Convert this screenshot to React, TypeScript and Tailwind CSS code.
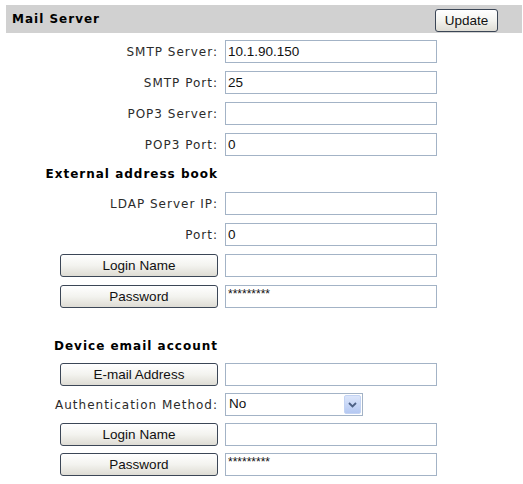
import React from "react";

const LABEL_FONT = { fontFamily: '"DejaVu Sans", Verdana, sans-serif' };
const UI_FONT = { fontFamily: '"Liberation Sans", Arial, sans-serif' };

function Label({ text }: { text: string }) {
  return (
    <div
      className="flex items-center justify-end whitespace-nowrap text-[12px] tracking-[1px] text-[#2b2b2b]"
      style={LABEL_FONT}
    >
      {text}
    </div>
  );
}

function XpButton({ text, className = "" }: { text: string; className?: string }) {
  return (
    <button
      className={`h-[23px] rounded-[3px] border border-[#3b4656] bg-gradient-to-b from-[#ffffff] via-[#f3f3ef] to-[#dedcd4] text-[13.5px] text-[#111111] leading-none ${className}`}
      style={UI_FONT}
    >
      {text}
    </button>
  );
}

function TextBox({ value = "", small = false }: { value?: string; small?: boolean }) {
  return (
    <input
      readOnly
      defaultValue={value}
      className={`h-[23px] w-[212px] border border-[#a3b3c6] bg-white px-[2px] text-[#111111] outline-none ${
        small ? "text-[12px] pb-[5px]" : "text-[13.5px]"
      }`}
      style={UI_FONT}
    />
  );
}

function SelectBox({ value }: { value: string }) {
  return (
    <div
      className="flex h-[23px] w-[138px] items-center border border-[#a3b3c6] bg-white pl-[3px] pr-[1px] text-[13.5px] text-[#111111]"
      style={UI_FONT}
    >
      <span className="flex-1">{value}</span>
      <span className="flex h-[19px] w-[17px] items-center justify-center rounded-[2px] border border-[#c3d3f3] bg-gradient-to-b from-[#dce6fb] to-[#b4c8f2]">
        <svg width="9" height="6" viewBox="0 0 9 6">
          <path d="M1 1 L4.5 4.5 L8 1" fill="none" stroke="#4d6185" strokeWidth="1.8" />
        </svg>
      </span>
    </div>
  );
}

function Heading({ text }: { text: string }) {
  return (
    <>
      <div
        className="flex h-[20px] items-center justify-end whitespace-nowrap text-[12px] font-bold tracking-[1px] text-black"
        style={LABEL_FONT}
      >
        {text}
      </div>
      <div />
    </>
  );
}

function ButtonCell({ text }: { text: string }) {
  return (
    <div className="flex justify-end">
      <XpButton text={text} className="w-[158px]" />
    </div>
  );
}

export default function App() {
  return (
    <div className="h-[484px] w-[523px] bg-white">
      <div className="ml-[6px] mr-[1px] mt-[5px] flex h-[28px] items-center justify-between bg-[#d1d1d1] pl-[6px] pr-[24px]">
        <span className="text-[12px] font-bold tracking-[1px] text-black" style={LABEL_FONT}>
          Mail Server
        </span>
        <XpButton text="Update" className="mt-[3px] w-[63px]" />
      </div>

      <div className="mt-[7px] grid grid-cols-[218px_212px] gap-x-[7px] gap-y-[8px]">
        <Label text="SMTP Server:" />
        <TextBox value="10.1.90.150" />
        <Label text="SMTP Port:" />
        <TextBox value="25" />
        <Label text="POP3 Server:" />
        <TextBox />
        <Label text="POP3 Port:" />
        <TextBox value="0" />

        <Heading text="External address book" />

        <Label text="LDAP Server IP:" />
        <TextBox />
        <Label text="Port:" />
        <TextBox value="0" />
        <ButtonCell text="Login Name" />
        <TextBox />
        <ButtonCell text="Password" />
        <TextBox value="*********" small />
      </div>

      <div className="mt-[28px] grid grid-cols-[218px_212px] gap-x-[7px] gap-y-[7px]">
        <Heading text="Device email account" />

        <ButtonCell text="E-mail Address" />
        <TextBox />
        <Label text="Authentication Method:" />
        <SelectBox value="No" />
        <ButtonCell text="Login Name" />
        <TextBox />
        <ButtonCell text="Password" />
        <TextBox value="*********" small />
      </div>
    </div>
  );
}
